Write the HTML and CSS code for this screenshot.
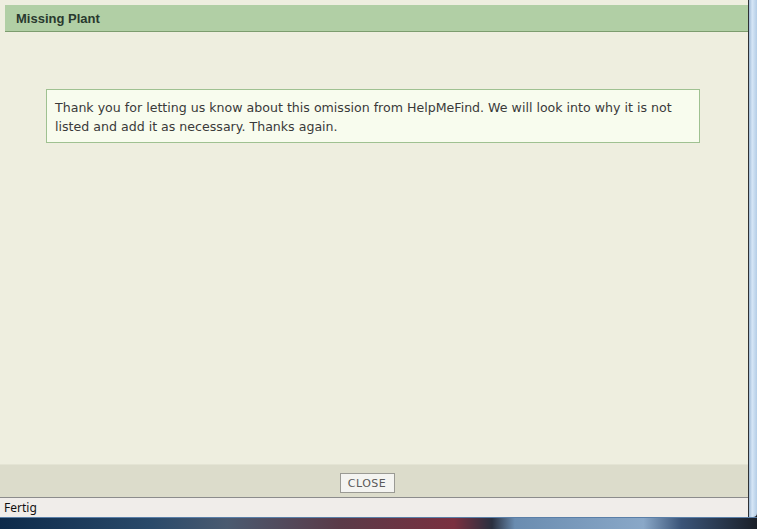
FILE: index.html
```html
<!DOCTYPE html>
<html lang="en">
<head>
  <meta charset="UTF-8">
  <title>Missing Plant</title>
  <link rel="stylesheet" href="styles.css">
</head>
<body>

  <div class="window">
    <div class="window-body">
      <div class="main">
        <div class="dialog">
          <header class="dialog-header">
            <h1>Missing Plant</h1>
          </header>
          <div class="message">
            Thank you for letting us know about this omission from HelpMeFind. We will look into why it is not listed and add it as necessary. Thanks again.
          </div>
        </div>
        <div class="dialog-footer">
          <button type="button" class="close-button">CLOSE</button>
        </div>
        <div class="statusbar">Fertig</div>
      </div>
      <div class="frame-right"></div>
    </div>
    <div class="frame-bottom"></div>
  </div>

</body>
</html>
```

FILE: styles.css
```css
html, body {
  margin: 0;
  height: 100%;
}
body {
  background: #1b1d22;
  font-family: 'DejaVu Sans', Verdana, sans-serif;
  overflow: hidden;
}
.window {
  width: 757px;
  height: 529px;
  display: flex;
  flex-direction: column;
}
.window-body {
  flex: 1;
  display: flex;
}
.main {
  width: 748px;
  display: flex;
  flex-direction: column;
  border-right: 1px solid #2e3034;
}
.dialog {
  flex: 1;
  background-color: #eeeedf;
  padding: 5px 0 0 5px;
}
.dialog-header {
  background-color: #b1cfa5;
  border-bottom: 1px solid #7c9c6e;
  height: 26px;
  padding-left: 11px;
  display: flex;
  align-items: center;
}
.dialog-header h1 {
  margin: 0;
  font-family: 'Liberation Sans', Arial, sans-serif;
  font-size: 13px;
  font-weight: bold;
  color: #29392e;
}
.message {
  margin: 57px 0 0 41px;
  width: 636px;
  padding: 8px 8px 6px;
  line-height: 19px;
  font-size: 12.6px;
  color: #3a3a3a;
  background-color: #f8fcee;
  border: 1px solid #9fc191;
}
.dialog-footer {
  height: 32px;
  background-color: #dcdccb;
  border-top: 1px solid #e4e4d4;
  display: flex;
  justify-content: center;
  align-items: flex-start;
  padding-right: 14px;
}
.close-button {
  width: 55px;
  height: 20px;
  padding: 0;
  margin-top: 8px;
  background-color: #f4f4f1;
  border: 1px solid #9a9a94;
  border-radius: 0;
  font-family: 'DejaVu Sans', Verdana, sans-serif;
  font-size: 11px;
  letter-spacing: 0.5px;
  color: #5a5a5a;
}
.statusbar {
  height: 19px;
  background-color: #f0edea;
  border-top: 1px solid #8c8c8c;
  padding-left: 4px;
  font-family: 'Noto Sans', 'DejaVu Sans', sans-serif;
  font-size: 12px;
  line-height: 19px;
  color: #111;
}
.frame-right {
  width: 8px;
  background: linear-gradient(to right, #9fbad6, #d6e6f6 40%, #b4cde6);
  border-bottom-right-radius: 4px;
}
.frame-bottom {
  height: 11px;
  border-top: 1px solid #5a7fa8;
  background: linear-gradient(to right, #0d2a4a 0%, #2a4a6a 20%, #4a5a70 30%, #5a3a48 45%, #7a3040 60%, #2a3040 65%, #6a8cb0 68%, #8aa8c8 85%, #3a5478 90%, #1a1f28 100%);
}
```
